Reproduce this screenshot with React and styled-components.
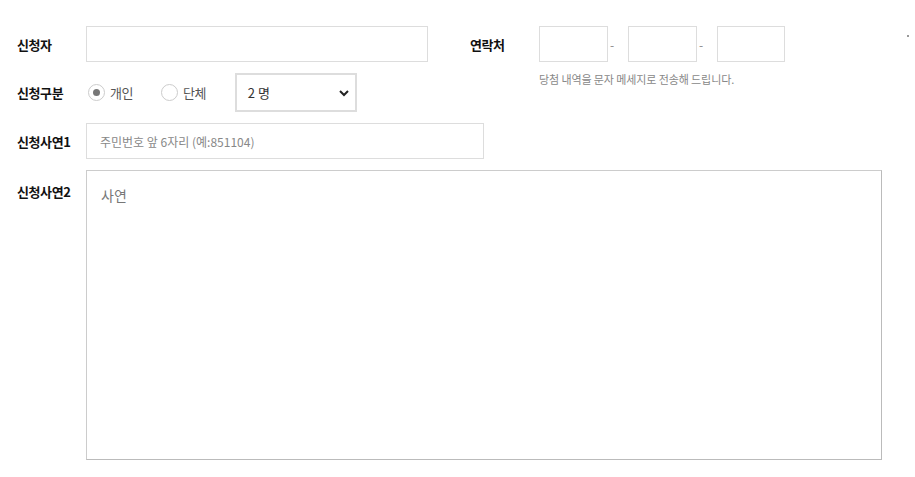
import React from 'react';
import styled, { createGlobalStyle } from 'styled-components';

const GlobalStyle = createGlobalStyle`
  html, body {
    margin: 0;
    padding: 0;
    background: #fff;
  }
  body {
    font-family: "Noto Sans CJK KR", "Noto Sans", sans-serif;
    color: #222;
  }
  * {
    box-sizing: border-box;
  }
`;

const Form = styled.form`
  display: flex;
  flex-direction: column;
  gap: 11px;
  padding: 26px 0 0 17px;
  width: 915px;
`;

const Row = styled.div`
  display: flex;
  align-items: ${(p) => (p.$top ? 'flex-start' : 'center')};
`;

const Label = styled.label`
  flex: none;
  width: ${(p) => p.$width || 69}px;
  font-size: 13px;
  font-weight: 700;
  letter-spacing: -0.4px;
  color: #111;
  padding-top: ${(p) => p.$padTop || 0}px;
`;

const TextInput = styled.input`
  width: ${(p) => p.$width}px;
  height: 36px;
  border: 1px solid #ddd;
  padding: 0 13px;
  font-family: inherit;
  font-size: 12px;
  letter-spacing: 0;
  color: #333;
  outline: none;
  &::placeholder {
    color: #888;
  }
`;

const Contact = styled.div`
  display: flex;
  flex-direction: column;
  height: 36px;
  margin-left: 42px;
`;

const PhoneGroup = styled.div`
  display: flex;
  align-items: center;
`;

const Dash = styled.span`
  width: 20px;
  padding-left: 2px;
  font-size: 12px;
  color: #888;
`;

const Note = styled.p`
  margin: 9px 0 0 69px;
  font-size: 11px;
  letter-spacing: -0.1px;
  color: #888;
  white-space: nowrap;
`;

const Dot = styled.span`
  width: 2px;
  height: 2px;
  margin: 0 0 16px 122px;
  background: #999;
  align-self: center;
`;

const RadioOption = styled.label`
  display: flex;
  align-items: center;
  gap: 5px;
  margin-right: ${(p) => p.$gap}px;
  margin-left: 2px;
  font-size: 13px;
  letter-spacing: -0.5px;
  color: #555;
`;

const RadioMark = styled.span`
  position: relative;
  width: 17px;
  height: 17px;
  border-radius: 50%;
  border: 1px solid #ccc;
  background: #fff;
  &::after {
    content: '';
    display: ${(p) => (p.$checked ? 'block' : 'none')};
    position: absolute;
    left: 4px;
    top: 4px;
    width: 7px;
    height: 7px;
    border-radius: 50%;
    background: #777;
  }
`;

const SelectBox = styled.div`
  display: flex;
  align-items: center;
  justify-content: space-between;
  width: 122px;
  height: 39px;
  border: 2px solid #ddd;
  padding: 0 4px 0 11px;
  font-size: 13px;
  color: #333;
  svg {
    display: block;
  }
`;

const TextArea = styled.textarea`
  width: 796px;
  height: 290px;
  border: 1px solid #ccc;
  border-right-color: #bbb;
  border-bottom-color: #bbb;
  padding: 14px 14px;
  font-family: inherit;
  font-size: 14px;
  color: #333;
  resize: none;
  outline: none;
  &::placeholder {
    color: #777;
  }
`;

function App() {
  return (
    <>
      <GlobalStyle />
      <Form>
        <Row>
          <Label>신청자</Label>
          <TextInput $width={342} />
          <Contact>
            <PhoneGroup>
              <Label>연락처</Label>
              <TextInput $width={69} />
              <Dash>-</Dash>
              <TextInput $width={69} />
              <Dash>-</Dash>
              <TextInput $width={68} />
            </PhoneGroup>
            <Note>당첨 내역을 문자 메세지로 전송해 드립니다.</Note>
          </Contact>
          <Dot />
        </Row>
        <Row>
          <Label>신청구분</Label>
          <RadioOption $gap={26}>
            <RadioMark $checked />
            개인
          </RadioOption>
          <RadioOption $gap={29}>
            <RadioMark />
            단체
          </RadioOption>
          <SelectBox>
            <span>2 명</span>
            <svg width="14" height="14" viewBox="0 0 14 14">
              <polyline points="3,5 7,9 11,5" fill="none" stroke="#222" strokeWidth="2" />
            </svg>
          </SelectBox>
        </Row>
        <Row>
          <Label>신청사연1</Label>
          <TextInput $width={398} placeholder="주민번호 앞 6자리 (예:851104)" />
        </Row>
        <Row $top>
          <Label $padTop={12}>신청사연2</Label>
          <TextArea placeholder="사연" />
        </Row>
      </Form>
    </>
  );
}

export default App;
